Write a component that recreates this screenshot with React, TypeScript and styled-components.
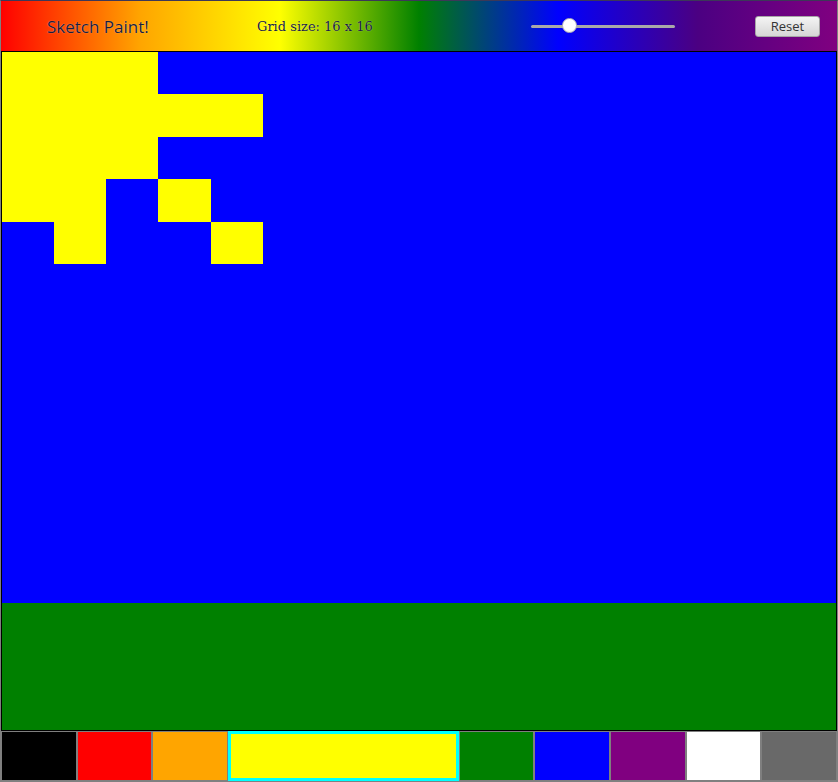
import React, { useState } from "react";
import styled, { createGlobalStyle } from "styled-components";

const Global = createGlobalStyle`
  html, body { margin: 0; padding: 0; height: 100%; }
  body { overflow: hidden; }
  #root { height: 100%; }
  * { box-sizing: border-box; }
`;

const Shell = styled.div`
  height: 100vh;
  width: 100%;
  display: flex;
  flex-direction: column;
  border: 1px solid #808080;
  border-top-color: #3c3858;
`;

const Header = styled.header`
  height: 50px;
  flex: none;
  display: flex;
  align-items: center;
  background: linear-gradient(to right, red, orange, yellow, green, blue, indigo, purple);
`;

const Title = styled.h1`
  margin: 0 0 0 46px;
  width: 210px;
  font-family: "Open Sans", "Noto Sans", sans-serif;
  font-weight: 400;
  font-size: 17px;
  color: #1a1c3c;
  text-shadow: 0 0 1px rgba(255, 255, 255, 0.6);
`;

const GridSize = styled.span`
  width: 274px;
  font-family: "DejaVu Serif", serif;
  font-size: 13px;
  color: #1a1c3c;
  text-shadow: 0 0 1px rgba(255, 255, 255, 0.6);
`;

const SliderWrap = styled.div`
  position: relative;
  width: 144px;
  height: 16px;
  display: flex;
  align-items: center;
`;

const Track = styled.div`
  width: 100%;
  height: 3px;
  border-radius: 2px;
  background: #a9a9a9;
`;

const Thumb = styled.div`
  position: absolute;
  top: 0;
  width: 15px;
  height: 15px;
  margin-left: -7.5px;
  border-radius: 50%;
  background: radial-gradient(circle at 50% 40%, #ffffff 55%, #e6e6e6);
  border: 1px solid #b8b8b8;
`;

const ResetButton = styled.button`
  margin-left: auto;
  margin-right: 17px;
  width: 65px;
  height: 21px;
  padding: 0;
  border: 1px solid #a6a6a6;
  border-radius: 3px;
  background: linear-gradient(#f4f4f4, #d6d6d6);
  font-family: "Open Sans", "Noto Sans", sans-serif;
  font-size: 13px;
  color: #333;
  cursor: pointer;
`;

const Board = styled.div`
  flex: 1;
  display: grid;
  grid-template-columns: repeat(16, 1fr);
  grid-template-rows: repeat(16, 1fr);
  border: 1px solid #000;
`;

const Cell = styled.div<{ $color: string }>`
  background: ${(p) => p.$color};
`;

const Palette = styled.div`
  height: 50px;
  flex: none;
  display: flex;
`;

const Swatch = styled.div<{ $color: string; $active: boolean }>`
  flex: ${(p) => (p.$active ? 3.05 : 1)} 1 0;
  background: ${(p) => p.$color};
  border: ${(p) => (p.$active ? "3px solid #00ffff" : "1px solid #7f7f7f")};
  cursor: pointer;
`;

const COLORS = ["black", "red", "orange", "yellow", "green", "blue", "purple", "white", "#696969"];

const yellowCells: Record<number, number[]> = {
  0: [0, 1, 2],
  1: [0, 1, 2, 3, 4],
  2: [0, 1, 2],
  3: [0, 1, 3],
  4: [1, 4],
};

function cellColor(r: number, c: number) {
  if (r >= 13) return "green";
  if (yellowCells[r]?.includes(c)) return "yellow";
  return "blue";
}

export default function App() {
  const [selected, setSelected] = useState(3);
  const size = 16;
  const min = 2;
  const max = 55;
  const pct = ((size - min) / (max - min)) * 100;
  const cells = [];
  for (let r = 0; r < 16; r++) {
    for (let c = 0; c < 16; c++) {
      cells.push(<Cell key={`${r}-${c}`} $color={cellColor(r, c)} />);
    }
  }
  return (
    <>
      <Global />
      <Shell>
        <Header>
          <Title>Sketch Paint!</Title>
          <GridSize>Grid size: 16 x 16</GridSize>
          <SliderWrap>
            <Track />
            <Thumb style={{ left: `${pct}%` }} />
          </SliderWrap>
          <ResetButton>Reset</ResetButton>
        </Header>
        <Board>{cells}</Board>
        <Palette>
          {COLORS.map((c, i) => (
            <Swatch key={c} $color={c} $active={i === selected} onClick={() => setSelected(i)} />
          ))}
        </Palette>
      </Shell>
    </>
  );
}
